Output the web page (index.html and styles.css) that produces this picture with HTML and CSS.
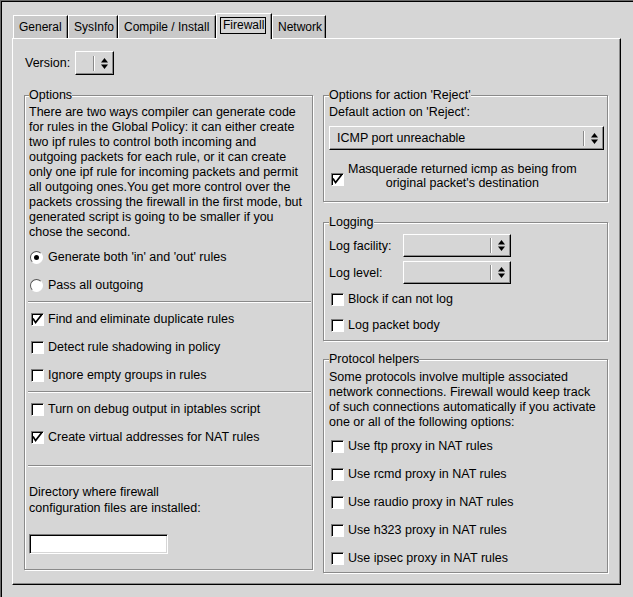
FILE: index.html
```html
<!DOCTYPE html>
<html>
<head>
<meta charset="utf-8">
<title>Firewall</title>
<link rel="stylesheet" href="styles.css">
</head>
<body>
<div class="window">
  <div class="notebook">
    <div class="tabs">
      <div class="tab t-general">General</div>
      <div class="tab t-sysinfo">SysInfo</div>
      <div class="tab t-compile">Compile / Install</div>
      <div class="tab active t-firewall"><span class="focus">Firewall</span></div>
      <div class="tab t-network">Network</div>
    </div>
    <div class="page">
      <div class="version-row">
        <span class="version-label">Version:</span>
        <div class="combo combo-version">
          <span class="val"></span><span class="sep"></span>
          <svg class="arrows" width="7" height="11" viewBox="0 0 7 11"><polygon points="0,4.5 3.5,0 7,4.5"/><polygon points="0,6.5 7,6.5 3.5,11"/></svg>
        </div>
      </div>
      <div class="columns">
        <fieldset class="frame frame-options">
          <legend>Options</legend>
          <p class="desc">There are two ways compiler can generate code<br>for rules in the Global Policy: it can either create<br>two ipf rules to control both incoming and<br>outgoing packets for each rule, or it can create<br>only one ipf rule for incoming packets and permit<br>all outgoing ones.You get more control over the<br>packets crossing the firewall in the first mode, but<br>generated script is going to be smaller if you<br>chose the second.</p>
          <div class="row first-radio"><span class="radio on"></span>Generate both 'in' and 'out' rules</div>
          <div class="row"><span class="radio"></span>Pass all outgoing</div>
          <div class="hsep"></div>
          <div class="row"><span class="cb"><svg width="11" height="11" viewBox="0 0 11 11"><path d="M1 4.5 L3.6 8.6 L9.6 0.8"/></svg></span>Find and eliminate duplicate rules</div>
          <div class="row"><span class="cb"></span>Detect rule shadowing in policy</div>
          <div class="row"><span class="cb"></span>Ignore empty groups in rules</div>
          <div class="hsep"></div>
          <div class="row"><span class="cb"></span>Turn on debug output in iptables script</div>
          <div class="row"><span class="cb"><svg width="11" height="11" viewBox="0 0 11 11"><path d="M1 4.5 L3.6 8.6 L9.6 0.8"/></svg></span>Create virtual addresses for NAT rules</div>
          <div class="hsep hsep-wide"></div>
          <p class="dir-label">Directory where firewall<br>configuration files are installed:</p>
          <div class="entry"></div>
        </fieldset>
        <div class="right-col">
          <fieldset class="frame frame-reject">
            <legend>Options for action 'Reject'</legend>
            <p class="line">Default action on 'Reject':</p>
            <div class="combo combo-reject">
              <span class="val">ICMP port unreachable</span><span class="sep"></span>
              <svg class="arrows" width="7" height="11" viewBox="0 0 7 11"><polygon points="0,4.5 3.5,0 7,4.5"/><polygon points="0,6.5 7,6.5 3.5,11"/></svg>
            </div>
            <div class="row masq"><span class="cb cb-low"><svg width="11" height="11" viewBox="0 0 11 11"><path d="M1 4.5 L3.6 8.6 L9.6 0.8"/></svg></span><span class="masq-text">Masquerade returned icmp as being from<br>original packet's destination</span></div>
          </fieldset>
          <fieldset class="frame frame-logging">
            <legend>Logging</legend>
            <div class="log-row">
              <span class="log-label">Log facility:</span>
              <div class="combo combo-log">
                <span class="val"></span><span class="sep"></span>
                <svg class="arrows" width="7" height="11" viewBox="0 0 7 11"><polygon points="0,4.5 3.5,0 7,4.5"/><polygon points="0,6.5 7,6.5 3.5,11"/></svg>
              </div>
            </div>
            <div class="log-row second">
              <span class="log-label">Log level:</span>
              <div class="combo combo-log">
                <span class="val"></span><span class="sep"></span>
                <svg class="arrows" width="7" height="11" viewBox="0 0 7 11"><polygon points="0,4.5 3.5,0 7,4.5"/><polygon points="0,6.5 7,6.5 3.5,11"/></svg>
              </div>
            </div>
            <div class="row row-short first-short"><span class="cb"></span>Block if can not log</div>
            <div class="row row-short"><span class="cb"></span>Log packet body</div>
          </fieldset>
          <fieldset class="frame frame-proto">
            <legend>Protocol helpers</legend>
            <p class="desc">Some protocols involve multiple associated<br>network connections. Firewall would keep track<br>of such connections automatically if you activate<br>one or all of the following options:</p>
            <div class="row first-proto"><span class="cb"></span>Use ftp proxy in NAT rules</div>
            <div class="row"><span class="cb"></span>Use rcmd proxy in NAT rules</div>
            <div class="row"><span class="cb"></span>Use raudio proxy in NAT rules</div>
            <div class="row"><span class="cb"></span>Use h323 proxy in NAT rules</div>
            <div class="row"><span class="cb"></span>Use ipsec proxy in NAT rules</div>
          </fieldset>
        </div>
      </div>
    </div>
  </div>
</div>
</body>
</html>
```

FILE: styles.css
```css
* { box-sizing: border-box; }
html, body { margin: 0; padding: 0; }
body {
  width: 633px;
  height: 597px;
  overflow: hidden;
  background: #d6d6d6;
  color: #000;
  font-family: "Liberation Sans", Arial, Helvetica, sans-serif;
  font-size: 12.5px;
}
.window {
  width: 633px;
  height: 597px;
  border-left: 1px solid #6b6b6b;
  border-top: 1px solid #6b6b6b;
  box-shadow: inset 1px 1px 0 #000;
  padding: 12px 0 0 11px;
}
.notebook { width: 609px; }

/* tabs */
.tabs {
  display: flex;
  align-items: flex-end;
  height: 25px;
  padding-left: 1px;
}
.tab {
  height: 23px;
  display: flex;
  align-items: center;
  padding-left: 5px;
  font-size: 12px;
  white-space: nowrap;
  background: #c9c9c9;
  border-left: 1px solid #fff;
  border-top: 1px solid #fff;
  border-right: 1px solid #000;
  box-shadow: inset -1px 0 0 #8a8a8a;
}
.t-general { width: 55px; }
.t-sysinfo { width: 50px; }
.t-compile { width: 98px; }
.t-firewall { width: 56px; }
.t-network { width: 54px; }
.tab.active {
  height: 26px;
  margin-bottom: -1px;
  padding: 0 0 2px 3px;
  background: #d6d6d6;
  position: relative;
  z-index: 1;
}
.focus {
  border: 1px solid #000;
  line-height: 15px;
  padding: 0 1px 0 2px;
}

/* page */
.page {
  width: 609px;
  height: 547px;
  border-top: 1px solid #fff;
  border-left: 1px solid #fff;
  border-right: 1px solid #000;
  border-bottom: 1px solid #000;
  box-shadow: inset -1px -1px 0 #8a8a8a;
  padding: 12px 11px 0 11px;
}
.version-row {
  display: flex;
  align-items: center;
  height: 24px;
}
.version-label { width: 51px; padding-left: 1px; }

/* option menu */
.combo {
  display: flex;
  align-items: center;
  height: 24px;
  background: #d6d6d6;
  border-top: 1px solid #fff;
  border-left: 1px solid #fff;
  border-right: 1px solid #000;
  border-bottom: 1px solid #000;
  box-shadow: inset -1px -1px 0 #8a8a8a;
  white-space: nowrap;
}
.combo .val { flex: 1; padding-left: 7px; }
.combo .sep {
  width: 2px;
  height: 15px;
  border-left: 1px solid #8a8a8a;
  background: #fff;
}
.combo .arrows { flex: none; margin: 0 5px 0 6px; fill: #000; }
.combo-version { width: 39px; }
.combo-reject { width: 275px; margin-top: 6px; }
.combo-log { width: 108px; height: 23px; }

/* layout columns */
.columns {
  display: flex;
  align-items: flex-start;
  gap: 10px;
  margin-top: 13px;
}
.right-col {
  display: flex;
  flex-direction: column;
  width: 285px;
}

/* frames */
.frame {
  margin: 0;
  min-width: 0;
  border: 1px solid #8a8a8a;
  box-shadow: inset 1px 1px 0 #fff, 1px 1px 0 #fff;
}
.frame legend {
  padding: 0;
  line-height: 14px;
  background: #d6d6d6;
  white-space: nowrap;
}
.frame-options { width: 289px; padding: 3px 3px 15px 4px; }
.frame-reject { padding: 3px 3px 11px 5px; }
.frame-logging { margin-top: 13px; padding: 5px 3px 2px 5px; }
.frame-proto { margin-top: 11px; padding: 4px 3px 0 5px; }

.desc, .line, .dir-label {
  margin: 0;
  white-space: nowrap;
  line-height: 15px;
}
.dir-label { line-height: 16px; margin-top: 17px; }

.row {
  display: flex;
  align-items: center;
  height: 28px;
  white-space: nowrap;
}
.row-short { height: 26px; }
.first-radio { margin-top: 3px; }
.first-short { margin-top: 2px; }
.first-proto { margin-top: 2px; }

.hsep {
  height: 2px;
  border-top: 1px solid #8a8a8a;
  background: #fff;
  margin: 2px -2px 2px -1px;
}
.hsep-wide { margin-top: 14px; margin-bottom: 0; }

/* check box */
.cb {
  flex: none;
  width: 13px;
  height: 13px;
  margin: 0 4px 0 2px;
  background: #fff;
  border: 1px solid;
  border-color: #7a7a7a #fff #fff #7a7a7a;
  box-shadow: inset 1px 1px 0 #000;
  display: flex;
}
.cb svg path { fill: none; stroke: #000; stroke-width: 1.7; }
.cb-low { margin-top: 6px; }

/* radio */
.radio {
  flex: none;
  width: 13px;
  height: 13px;
  margin: 0 5px 0 1px;
  border-radius: 50%;
  border: 1px solid;
  border-color: #555 #fff #fff #555;
  background: #fff;
  display: flex;
  align-items: center;
  justify-content: center;
}
.radio.on::after {
  content: "";
  width: 5px;
  height: 5px;
  border-radius: 50%;
  background: #000;
}

/* reject frame */
.masq { height: auto; margin-top: 12px; }
.masq-text { text-align: center; line-height: 14px; }

/* logging */
.log-row {
  display: flex;
  align-items: center;
  height: 23px;
}
.log-row.second { margin-top: 4px; }
.log-label { width: 74px; white-space: nowrap; }

/* entry */
.entry {
  width: 139px;
  height: 20px;
  margin-top: 18px;
  background: #fff;
  border: 1px solid;
  border-color: #7a7a7a #fff #fff #7a7a7a;
  box-shadow: inset 1px 1px 0 #000, inset -1px -1px 0 #d6d6d6;
}
```
